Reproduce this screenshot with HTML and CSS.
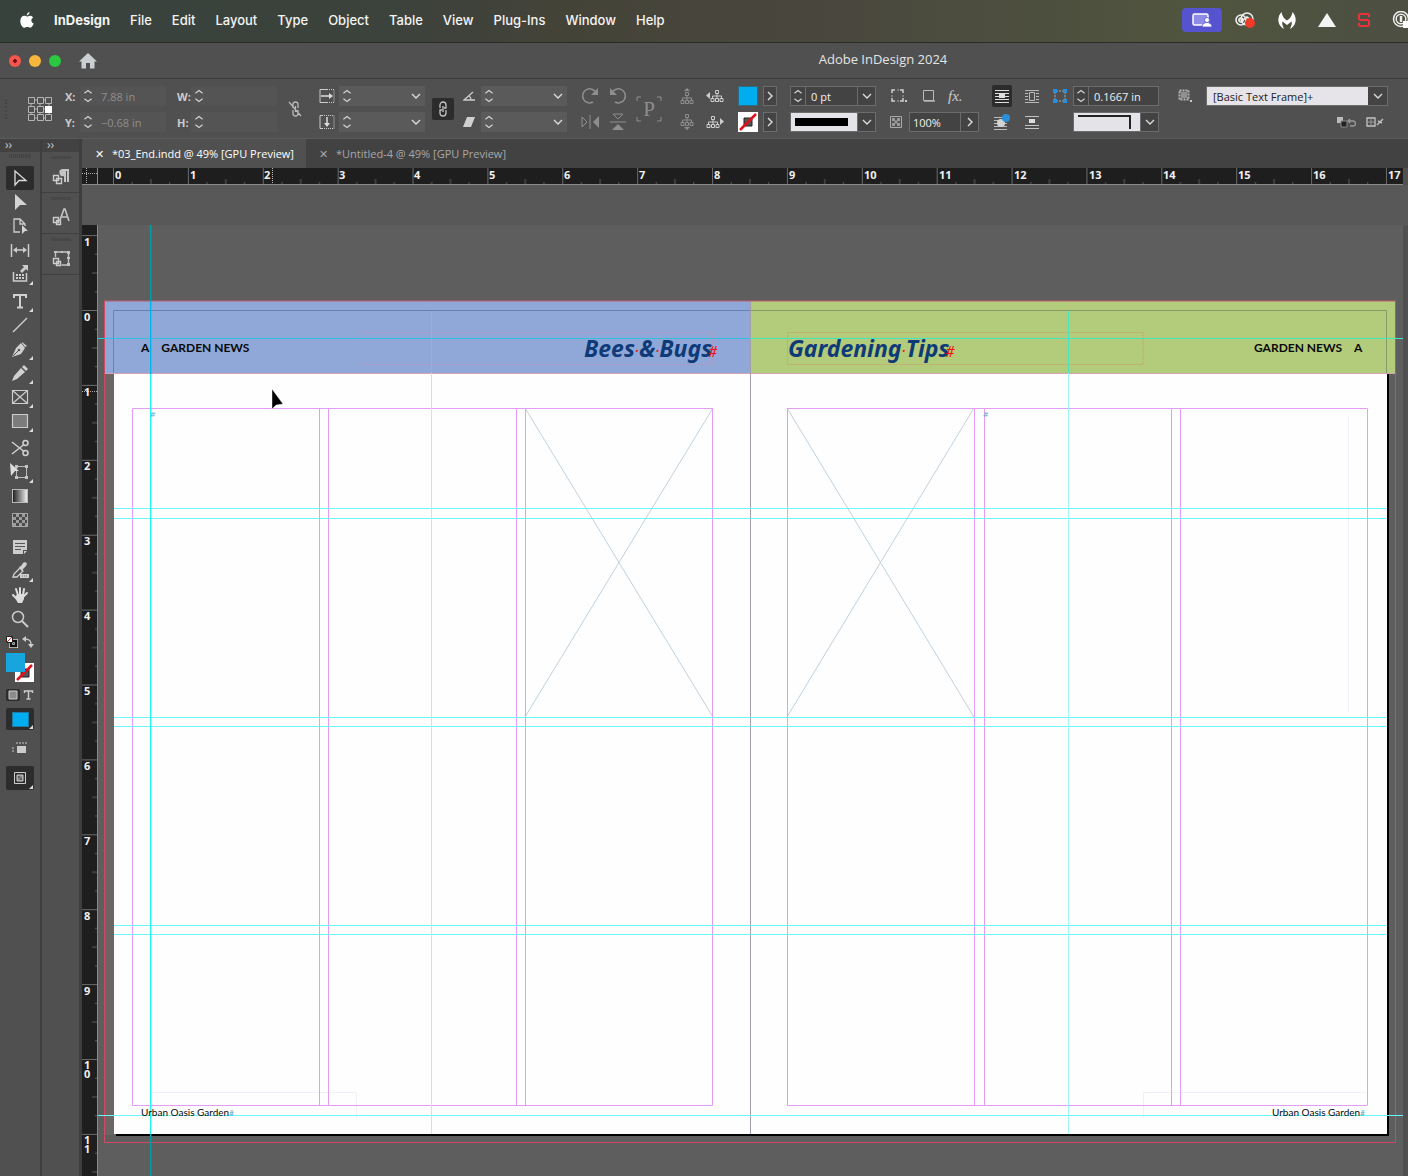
FILE: index.html
```
<!DOCTYPE html>
<html lang="en">
<head>
    <meta charset="UTF-8">
    <meta name="viewport" content="width=device-width, initial-scale=1.0">
    <title>Adobe InDesign 2024</title>
    <link rel="stylesheet" href="styles.css">
</head>
<body>
    <!-- shared icon shapes -->
    <svg class="defs" width="0" height="0" aria-hidden="true">
        <symbol id="spin" viewBox="0 0 14 20"><path d="M3 7l4-3 4 3M3 13l4 3 4-3" fill="none" stroke="#d4d4d4" stroke-width="1.3"/></symbol>
        <symbol id="down" viewBox="0 0 10 10"><path d="M1 3l4 4 4-4" fill="none" stroke="#dedede" stroke-width="1.3"/></symbol>
        <symbol id="right" viewBox="0 0 10 10"><path d="M3 1l4 4-4 4" fill="none" stroke="#dedede" stroke-width="1.4"/></symbol>
        <symbol id="tree" viewBox="0 0 14 12"><path d="M5.500.500h3v3h-3zM1 8.500h3v3H1zM5.500 8.500h3v3h-3zM10 8.500h3v3h-3zM7 3.500v5M2.500 8.500V6h9v2.500" fill="none" stroke="currentColor"/></symbol>
    </svg>

    <header class="menubar">
        <nav class="menus" aria-label="Menu bar">
            <button aria-label="Apple menu"><svg width="14" height="16" viewBox="0 0 14 16"><path d="M9.500 0c.1 1.600-1.100 3.300-2.700 3.500C6.600 2 8 .300 9.500 0zM7 4.500c.8 0 1.700-.8 3.100-.8 1.200 0 2.300.6 3 1.700-2.600 1.600-2.200 5 .6 6.100-.7 1.900-2 4.200-3.400 4.200-1.100 0-1.500-.7-2.900-.7s-1.800.7-2.900.7C2.500 15.700.3 12.400.3 8.900c0-3.200 2-5.100 4-5.100 1.200 0 2 .7 2.700.7z" fill="#fff"/></svg></button>
            <button class="app-name">InDesign</button>
            <button>File</button>
            <button>Edit</button>
            <button>Layout</button>
            <button>Type</button>
            <button>Object</button>
            <button>Table</button>
            <button>View</button>
            <button>Plug-Ins</button>
            <button>Window</button>
            <button>Help</button>
        </nav>
        <div class="status">
            <button class="share" aria-label="Screen sharing"><svg width="20" height="14" viewBox="0 0 20 14"><rect x="1" y="1" width="15" height="11" rx="1.500" fill="#8f8ce8" stroke="#fff" stroke-width="1.500"/><path d="M10 14c0-6 10-6 10 0z" fill="#fff" stroke="#5653cf" stroke-width=".8"/><circle cx="15" cy="7" r="2.500" fill="#fff" stroke="#5653cf" stroke-width=".8"/></svg></button>
            <svg width="22" height="18" viewBox="0 0 22 18"><g fill="none" stroke="#eee" stroke-width="1.600"><circle cx="7" cy="9" r="5"/><circle cx="13" cy="8" r="6"/><circle cx="7" cy="9" r="2"/><path d="M8 10l5-4 4 3"/></g><circle cx="16" cy="12" r="5" fill="#f03a2a"/></svg>
            <svg width="18" height="17" viewBox="0 0 18 17"><path d="M3.500 0C4 4 6 6.500 9 8.500 12 6.500 14 4 14.500 0c4 4 5 12-1.500 16.500h-1c2-3 2-5.500 1.500-7L9 13 4.500 9.500C4 11 4 13.500 6 16.500H5C-1.500 12-.5 4 3.500 0z" fill="#fff"/></svg>
            <svg width="18" height="14" viewBox="0 0 18 14"><path d="M9 0l9 14H0z" fill="#f4f4f4"/></svg>
            <svg width="12" height="14" viewBox="0 0 12 14"><path d="M11 4V2L10 1H2L1 2v4l1 1h8l1 1v4l-1 1H2l-1-1v-2" fill="none" stroke="#e8323c" stroke-width="2"/></svg>
            <svg width="18" height="18" viewBox="0 0 18 18"><g fill="none" stroke="#f0f0f0" stroke-width="1.500"><circle cx="9" cy="8" r="7.500"/><circle cx="9" cy="8" r="4.800"/><path d="M9 5v6" stroke-width="2.500"/></g><path d="M11 10h7v7h-7z" fill="#fff"/></svg>
        </div>
    </header>

    <div class="titlebar">
        <div class="lights">
            <button class="light close" aria-label="Close"></button>
            <button class="light minimize" aria-label="Minimize"></button>
            <button class="light full" aria-label="Full screen"></button>
            <button class="home" aria-label="Home"><svg width="18" height="16" viewBox="0 0 18 16"><path d="M9 0l9 8.500h-2.500V15.500H11V10H7v5.500H2.500v-7H0z" fill="#ccd0d4"/></svg></button>
        </div>
        <h1>Adobe InDesign 2024</h1>
    </div>

    <div class="control">
        <div class="tall grip"></div>
        <button class="tall" aria-label="Reference point"><svg width="26" height="26" viewBox="0 0 26 26"><path d="M4 4h18v18H4zM4 13h18M13 4v18" fill="none" stroke="#aaa"/><g fill="#505050" stroke="#b4b4b4"><path d="M1.500 1.500h6v6h-6zM10.500 1.500h6v6h-6zM18.500 1.500h6v6h-6zM1.500 10.500h6v6h-6zM10.500 10.500h6v6h-6zM1.500 18.500h6v6h-6zM10.500 18.500h6v6h-6zM18.500 18.500h6v6h-6z"/></g><path d="M18 10h7v7h-7z" fill="#fff"/></svg></button>

        <label for="pos-x">X:</label>
        <label for="pos-y">Y:</label>
        <div class="field dim"><svg class="spin"><use href="#spin"/></svg><input id="pos-x" value="7.88 in"></div>
        <div class="field dim"><svg class="spin"><use href="#spin"/></svg><input id="pos-y" value="−0.68 in"></div>
        <label for="size-w">W:</label>
        <label for="size-h">H:</label>
        <div class="field dim"><svg class="spin"><use href="#spin"/></svg><input id="size-w"></div>
        <div class="field dim"><svg class="spin"><use href="#spin"/></svg><input id="size-h"></div>
        <button class="tall" aria-label="Constrain width and height"><svg width="14" height="16" viewBox="0 0 14 16"><path d="M5 7V3.500a2.500 2.500 0 0 1 5 0V7M5 9v3.500a2.500 2.500 0 0 0 5 0V9M7.500 5v6M1 1l12 14" fill="none" stroke="#b8b8b8" stroke-width="1.300"/></svg></button>

        <label for="scale-x" aria-label="Scale X"><svg width="16" height="14" viewBox="0 0 16 14"><path d="M9 .500H1v13h8" fill="none" stroke="#ccc"/><path d="M10 .500h5v13h-5" fill="none" stroke="#ccc" stroke-dasharray="1 1"/><path d="M2 7h9" stroke="#ddd" stroke-width="1.500"/><path d="M10 4l4 3-4 3z" fill="#ddd"/></svg></label>
        <label for="scale-y" aria-label="Scale Y"><svg width="16" height="14" viewBox="0 0 16 14"><path d="M4 .500H1v13h3" fill="none" stroke="#ccc"/><path d="M5 .500h10v13H5" fill="none" stroke="#ccc" stroke-dasharray="1 1"/><path d="M8 2v7" stroke="#ddd" stroke-width="1.500"/><path d="M5 8h6l-3 4z" fill="#ddd"/></svg></label>
        <div class="field soft"><svg class="spin"><use href="#spin"/></svg><input id="scale-x"><button aria-label="Scale X presets"><svg class="mark"><use href="#down"/></svg></button></div>
        <div class="field soft"><svg class="spin"><use href="#spin"/></svg><input id="scale-y"><button aria-label="Scale Y presets"><svg class="mark"><use href="#down"/></svg></button></div>
        <button class="tall pressed" aria-label="Constrain scaling"><svg width="12" height="16" viewBox="0 0 12 16"><path d="M3 7V4a3 3 0 0 1 6 0v3H7M9 9v3a3 3 0 0 1-6 0V9h2M6 5v6" fill="none" stroke="#c4c4c4" stroke-width="1.300"/></svg></button>
        <label for="rotate" aria-label="Rotation"><svg width="12" height="10" viewBox="0 0 12 10"><path d="M10 1L1 9h11M6 5c2 1 2 2 2 4" fill="none" stroke="#ccc" stroke-width="1.300"/></svg></label>
        <label for="shear" aria-label="Shear"><svg width="12" height="10" viewBox="0 0 12 10"><path d="M4 0h8L8 10H0z" fill="#d0d0d0"/></svg></label>
        <div class="field soft"><svg class="spin"><use href="#spin"/></svg><input id="rotate"><button aria-label="Rotation presets"><svg class="mark"><use href="#down"/></svg></button></div>
        <div class="field soft"><svg class="spin"><use href="#spin"/></svg><input id="shear"><button aria-label="Shear presets"><svg class="mark"><use href="#down"/></svg></button></div>

        <button class="off" aria-label="Rotate clockwise"><svg width="18" height="18" viewBox="0 0 18 18"><path d="M12 15A7 7 0 1 1 15 6" fill="none" stroke="currentColor" stroke-width="1.500"/><path d="M17 1v7h-7z" fill="currentColor"/></svg></button>
        <button class="off" aria-label="Flip horizontal"><svg width="18" height="14" viewBox="0 0 18 14"><path d="M1 2l5 5-5 5zM9 0v14" fill="none" stroke="currentColor"/><path d="M18 1v12l-6-6z" fill="currentColor"/></svg></button>
        <button class="off" aria-label="Rotate counterclockwise"><svg width="18" height="18" viewBox="0 0 18 18"><path d="M6 15A7 7 0 1 0 3 6" fill="none" stroke="currentColor" stroke-width="1.500"/><path d="M1 1v7h7z" fill="currentColor"/></svg></button>
        <button class="off" aria-label="Flip vertical"><svg width="18" height="18" viewBox="0 0 18 18"><path d="M4 1l5 5 5-5zM1 9h16" fill="none" stroke="currentColor"/><path d="M3 17h12l-6-6z" fill="currentColor"/></svg></button>
        <div class="tall off flip"><svg width="26" height="26" viewBox="0 0 26 26"><path d="M1 5V1h4M21 1h4v4M25 21v4h-4M5 25H1v-4" fill="none" stroke="currentColor"/></svg><span>P</span></div>
        <button class="off" aria-label="Select container"><svg width="14" height="16" viewBox="0 0 14 16"><path d="M4 3h6L7 0z" fill="currentColor"/><use href="#tree" y="4" width="14" height="12"/></svg></button>
        <button class="off" aria-label="Select content"><svg width="14" height="16" viewBox="0 0 14 16"><path d="M4 13h6l-3 3z" fill="currentColor"/><use href="#tree" width="14" height="12"/></svg></button>
        <button aria-label="Select previous object"><svg width="18" height="12" viewBox="0 0 18 12"><path d="M4 2v7L0 5.500z" fill="currentColor"/><use href="#tree" x="4" width="14" height="12"/></svg></button>
        <button aria-label="Select next object"><svg width="18" height="12" viewBox="0 0 18 12"><path d="M14 2v7l4-3.500z" fill="currentColor"/><use href="#tree" width="14" height="12"/></svg></button>

        <button class="swatch fill" aria-label="Fill"></button>
        <button class="swatch" aria-label="Stroke"><svg width="20" height="20" viewBox="0 0 20 20"><path d="M0 0h20v20H0z" fill="#fff"/><path d="M6 6h8v8H6z" fill="#555" stroke="#222"/><path d="M2 18L18 2" stroke="#e0101e" stroke-width="2.500"/></svg></button>
        <button class="more" aria-label="Fill options"><svg class="mark"><use href="#right"/></svg></button>
        <button class="more" aria-label="Stroke options"><svg class="mark"><use href="#right"/></svg></button>
        <div class="field"><svg class="spin"><use href="#spin"/></svg><input value="0 pt" aria-label="Stroke weight"><button aria-label="Stroke weight presets"><svg class="mark"><use href="#down"/></svg></button></div>
        <button class="field preview" aria-label="Stroke type"><span class="sample"><i class="rule"></i></span><span class="chev"><svg class="mark"><use href="#down"/></svg></span></button>

        <div class="row spread-out">
            <button aria-label="Corner options"><svg width="18" height="14" viewBox="0 0 18 14"><path d="M2 4V1h3M10 1h3v3M13 9v3h-3M5 12H2V9" fill="none" stroke="#d0d0d0" stroke-width="1.500"/><path d="M7 1h2M13 6v2M7 12h2M2 6v2" stroke="#aaa"/><path d="M15 11h2v2h-2z" fill="#ccc"/></svg></button>
            <button aria-label="Drop shadow"><svg width="14" height="14" viewBox="0 0 14 14"><path d="M3 11h11v2H3z" fill="#999"/><path d="M2.500 1.500h10v10h-10z" fill="#4f4f4f" stroke="#bbb"/></svg></button>
            <button class="fx" aria-label="Effects">fx.</button>
        </div>
        <div class="row">
            <svg width="12" height="12" viewBox="0 0 12 12"><path d="M.500.500h11v11H.500z" fill="none" stroke="#aaa"/><path d="M2 2h3v3H2zM7 2h3v3H7zM4.500 4.500h3v3h-3zM2 7h3v3H2zM7 7h3v3H7z" fill="#9a9a9a"/></svg>
            <div class="field opacity"><input value="100%" aria-label="Opacity"><button aria-label="Opacity slider"><svg class="mark"><use href="#right"/></svg></button></div>
        </div>
        <button class="pressed small" aria-label="No text wrap"><svg width="14" height="14" viewBox="0 0 14 14"><path d="M0 1.500h14M0 4.500h14M0 7.500h14M0 10.500h14M0 13.500h14" stroke="#ddd"/><path d="M4 4h6v5H4z" fill="#ddd"/></svg></button>
        <button class="small" aria-label="Wrap around shape"><svg width="16" height="16" viewBox="0 0 16 16"><path d="M0 3.500h13M0 6.500h13M0 9.500h13M0 12.500h13M0 15.500h13" stroke="#bbb"/><circle cx="7" cy="9" r="4" fill="#d4d4d4"/><circle cx="12" cy="4" r="4" fill="#2b8ed8"/></svg></button>
        <button class="small" aria-label="Wrap around bounding box"><svg width="14" height="14" viewBox="0 0 14 14"><path d="M0 1.500h14M0 4.500h3M0 7.500h3M0 10.500h3M11 4.500h3M11 7.500h3M11 10.500h3M0 13.500h14" stroke="#b8b8b8"/><path d="M4.500 3.500h5v8h-5z" fill="none" stroke="#b8b8b8"/></svg></button>
        <button class="small" aria-label="Jump object"><svg width="14" height="14" viewBox="0 0 14 14"><path d="M0 1.500h14M0 10.500h14M0 13.500h14" stroke="#c4c4c4"/><path d="M4 4h6v4H4z" fill="#ddd"/></svg></button>
        <svg width="16" height="16" viewBox="0 0 16 16"><path d="M4 3h8M4 13h8M3 4v8M13 4v8" stroke="#aaa" stroke-dasharray="2 1"/><path d="M1 1h4v4H1zM11 1h4v4h-4zM1 11h4v4H1zM11 11h4v4h-4z" fill="#2b8ed8"/></svg>
        <span></span>
        <div class="field"><svg class="spin"><use href="#spin"/></svg><input value="0.1667 in" aria-label="Corner size"></div>
        <button class="field preview" aria-label="Corner shape"><span class="sample"><i class="bend"></i></span><span class="chev"><svg class="mark"><use href="#down"/></svg></span></button>
        <button aria-label="Object style options"><svg width="16" height="14" viewBox="0 0 16 14"><path d="M2.500 1.500h9v9h-9z" fill="none" stroke="#b4b4b4" stroke-width="2" stroke-dasharray="2 1"/><path d="M4 3h6v6H4z" fill="#909090"/><path d="M13 11h2v2h-2z" fill="#ccc"/></svg></button>
        <span></span>
        <div class="style-pick"><select aria-label="Object style"><option>[Basic Text Frame]+</option></select><svg class="mark"><use href="#down"/></svg></div>
        <div class="row trailing">
            <button class="off" aria-label="Clear overrides"><svg width="20" height="12" viewBox="0 0 20 12"><path d="M1 1h6v6H1z" fill="#bbb"/><path d="M5 5h6v6H5z" fill="#222" stroke="#888"/><path d="M14 3l-2 2 2 2M13 5h4a2 2 0 0 1 0 5h-3" fill="none" stroke="#999" stroke-width="1.300"/></svg></button>
            <button aria-label="Clear undefined attributes"><svg width="18" height="10" viewBox="0 0 18 10"><path d="M1 1h8v8H1z" fill="none" stroke="#c4c4c4" stroke-width="1.300"/><path d="M5 1v8M1 5h8" stroke="#999"/><path d="M11 8l6-6M12 4l4 2" stroke="#bbb" stroke-width="1.500"/></svg></button>
        </div>
    </div>

    <main class="workspace">
        <aside class="tools" aria-label="Tools">
            <div class="strip">››</div>
            <div class="handle"></div>
            <button class="tool active" aria-label="Selection"><svg width="20" height="20" viewBox="0 0 20 20"><path d="M5 3l11 9.500H9L5 17z" fill="none" stroke="#ddd" stroke-width="1.300"/></svg></button>
            <button class="tool" aria-label="Direct selection"><svg width="20" height="20" viewBox="0 0 20 20"><path d="M5 2l12 11h-7l-5 5z" fill="#d4d4d4"/></svg></button>
            <button class="tool" aria-label="Page"><svg width="20" height="20" viewBox="0 0 20 20"><path d="M10 16H4V3h6l5 5v2M10 3v5h5" fill="none" stroke="#ccc" stroke-width="1.300"/><path d="M12 9l6 6h-3l-3 3z" fill="#d4d4d4"/></svg></button>
            <button class="tool" aria-label="Gap"><svg width="20" height="20" viewBox="0 0 20 20"><path d="M1.500 4v13M18.500 4v13M4 10h12" stroke="#ccc" stroke-width="1.500"/><path d="M7 7l-4 3 4 3zM13 7l4 3-4 3z" fill="#ccc"/></svg></button>
            <button class="tool more-tools" aria-label="Content collector"><svg width="20" height="20" viewBox="0 0 20 20"><path d="M3.500 8v9h13V9" fill="none" stroke="#ccc" stroke-width="1.500"/><path d="M6 10h2v2H6zM9 10h2v2H9zM12 10h2v2h-2zM6 13h2v2H6zM9 13h2v2H9zM12 13h2v2h-2zM10 7l4-4-2-2h6v6l-2-2-4 4z" fill="#ccc"/></svg></button>
            <button class="tool more-tools set" aria-label="Type"><svg width="20" height="20" viewBox="0 0 20 20"><path d="M4 7V4h12v3M10 4v12M7 16.500h6" fill="none" stroke="#d0d0d0" stroke-width="2"/></svg></button>
            <button class="tool" aria-label="Line"><svg width="20" height="20" viewBox="0 0 20 20"><path d="M3 17L17 3" stroke="#ccc" stroke-width="1.500"/></svg></button>
            <button class="tool more-tools" aria-label="Pen"><svg width="20" height="20" viewBox="0 0 20 20"><path d="M12 3l5 4-2 1-3-4zM11 4l4 5-4 6-9 3 4-9z" fill="#d0d0d0"/><path d="M3 17l6-6" stroke="#505050"/><circle cx="9" cy="11" r="1.200" fill="#505050"/></svg></button>
            <button class="tool more-tools" aria-label="Pencil"><svg width="20" height="20" viewBox="0 0 20 20"><path d="M14 2l4 4-2 2-4-4zM11 5l4 4-8 7-5 2 2-5z" fill="#d0d0d0"/></svg></button>
            <button class="tool more-tools" aria-label="Rectangle frame"><svg width="20" height="20" viewBox="0 0 20 20"><path d="M2.500 3.500h15v13h-15zl15 13M17.500 3.500l-15 13" fill="none" stroke="#ccc" stroke-width="1.200"/></svg></button>
            <button class="tool more-tools" aria-label="Rectangle"><svg width="20" height="20" viewBox="0 0 20 20"><path d="M2.500 3.500h15v13h-15z" fill="#7c7c7c" stroke="#ccc" stroke-width="1.200"/></svg></button>
            <button class="tool set" aria-label="Scissors"><svg width="20" height="20" viewBox="0 0 20 20"><g fill="none" stroke="#d0d0d0" stroke-width="1.500"><circle cx="15.500" cy="5" r="2.500"/><circle cx="15.500" cy="15" r="2.500"/><path d="M2 4l12 9.500M2 16l12-9.500"/></g></svg></button>
            <button class="tool more-tools" aria-label="Free transform"><svg width="20" height="20" viewBox="0 0 20 20"><path d="M6.500 4.500h10v11h-10z" fill="none" stroke="#bbb"/><path d="M5 3h3v3H5zM15 3h3v3h-3zM5 14h3v3H5zM15 14h3v3h-3z" fill="#c4c4c4"/><path d="M0 1l9 8H5l-4 5z" fill="#ddd"/></svg></button>
            <button class="tool" aria-label="Gradient swatch"><span class="gradient"></span></button>
            <button class="tool" aria-label="Gradient feather"><svg width="16" height="14" viewBox="0 0 16 14"><path d="M.500.500h15v13H.500z" fill="#4a4a4a" stroke="#aaa"/><path d="M1 4h3v3H1zM7 4h3v3H7zM4 7h3v3H4zM10 7h3v3h-3zM1 10h3v3H1zM7 10h3v3H7zM13 4h2v3h-2zM13 10h2v3h-2zM4 1h3v3H4zM10 1h3v3h-3z" fill="#9c9c9c"/></svg></button>
            <button class="tool set" aria-label="Note"><svg width="20" height="20" viewBox="0 0 20 20"><path d="M3 3h14v10h-4v4H3zM14 14h3l-3 3z" fill="#ccc"/><path d="M5 6.500h10M5 9.500h10M5 12.500h6" stroke="#555"/></svg></button>
            <button class="tool more-tools" aria-label="Color theme"><svg width="20" height="20" viewBox="0 0 20 20"><path d="M3 16l1-3 6-6 3 3-6 6z" fill="none" stroke="#d0d0d0" stroke-width="1.300"/><path d="M9 6l2-1 2-3c3-2 5 1 3 3l-3 3-1 2zM10 13h9v4h-9z" fill="#d0d0d0"/><path d="M12 15h5" stroke="#666" stroke-dasharray="1 1"/></svg></button>
            <button class="tool" aria-label="Hand"><svg width="20" height="20" viewBox="0 0 20 20"><path d="M6 4l2 6M10 3v7M14 4l-1 6M17 8l-4 4M3 10l4 4" stroke="#ddd" stroke-width="2" stroke-linecap="round"/><path d="M7 9h7v5l-2 4H8l-3-5z" fill="#ddd"/></svg></button>
            <button class="tool" aria-label="Zoom"><svg width="20" height="20" viewBox="0 0 20 20"><circle cx="8" cy="8" r="5.500" fill="none" stroke="#ccc" stroke-width="1.500"/><path d="M12 12l6 6" stroke="#ccc" stroke-width="2"/></svg></button>
            <div class="pair">
                <button aria-label="Default fill and stroke"><svg width="12" height="14" viewBox="1 0 12 14"><path d="M6 6h5v5H6z" fill="none" stroke="#ddd" stroke-width="4"/><path d="M6 6h5v5H6z" fill="none" stroke="#111" stroke-width="2.500"/><path d="M1.500 1.500h6v6h-6z" fill="#fff" stroke="#222"/><path d="M2 7l5-5" stroke="#d22"/></svg></button>
                <button aria-label="Swap fill and stroke"><svg width="12" height="12" viewBox="0 0 12 12"><path d="M3 3c5 0 6 2 6 6" fill="none" stroke="#ccc" stroke-width="1.500"/><path d="M0 3l4-3v6zM6 8h6l-3 4z" fill="#ccc"/></svg></button>
            </div>
            <div class="colors"><svg width="28" height="30" viewBox="0 0 28 30"><path d="M9 10h19v19H9z" fill="#fff"/><path d="M15 16h8v8h-8z" fill="#555" stroke="#222"/><path d="M11 27L26 12" stroke="#e0101e" stroke-width="2.500"/><path d="M0 0h19v19H0z" fill="#18a5dd"/></svg></div>
            <div class="pair">
                <button class="pressed" aria-label="Formatting affects container"><svg width="14" height="12" viewBox="0 0 14 12"><path d="M3 2h8v8H3z" fill="#8c8c8c" stroke="#ccc"/></svg></button>
                <button aria-label="Formatting affects text"><svg width="12" height="12" viewBox="0 0 12 12"><path d="M2.500 4V2h8v2M6.500 2v8M4.500 10h4" fill="none" stroke="#ccc" stroke-width="1.400"/></svg></button>
            </div>
            <button class="tool active more-tools apply" aria-label="Apply color"><span class="cyan"></span></button>
            <button class="tool view" aria-label="View options"><svg width="16" height="12" viewBox="0 0 16 12"><path d="M5 4h9v7H5z" fill="#ccc"/><path d="M4 1h11M1 5v6" stroke="#a0a0a0" stroke-width="1.500" stroke-dasharray="2 1"/></svg></button>
            <button class="tool active more-tools view" aria-label="Screen mode"><svg width="12" height="12" viewBox="0 0 12 12"><path d="M.500.500h11v11H.500z" fill="none" stroke="#ccc"/><path d="M3 3h6v6H3z" fill="#888" stroke="#ccc"/><path d="M4 5h2M6 7h2" stroke="#333"/></svg></button>
        </aside>

        <aside class="dock" aria-label="Panels">
            <div class="strip">››</div>
            <button class="panel" aria-label="Paragraph styles"><svg width="20" height="20" viewBox="0 0 20 20"><path d="M11 2h7v13h-2V4h-1v11h-2V9a3.500 3.500 0 0 1-2-7z" fill="#c4c4c4"/><path d="M2.500 8.500h5v5h-5zM5.500 11.500h5v5h-5z" fill="#505050" stroke="#ccc" stroke-width="1.400"/></svg></button>
            <button class="panel" aria-label="Character styles"><svg width="20" height="20" viewBox="0 0 20 20"><path d="M9 12l4-11h1l4 12M10 9h7" fill="none" stroke="#c4c4c4" stroke-width="1.600"/><path d="M2.500 9.500h5v5h-5zM5.500 12.500h4v4h-4z" fill="#505050" stroke="#ccc" stroke-width="1.400"/></svg></button>
            <button class="panel" aria-label="Object styles"><svg width="20" height="20" viewBox="0 0 20 20"><path d="M4.500 8V3h13v13h-7" fill="none" stroke="#c4c4c4" stroke-width="1.400"/><path d="M3 2h3v2H3zM16 2h3v3h-3zM16 14h3v3h-3zM10 2h2v2h-2zM16 8h3v2h-3z" fill="#c4c4c4"/><path d="M2.500 9.500h5v5h-5zM5.500 12.500h4v4h-4z" fill="#505050" stroke="#ccc" stroke-width="1.400"/></svg></button>
        </aside>

        <section class="document">
            <div class="tabs" role="tablist">
                <button class="tab current" role="tab" aria-selected="true"><span>✕</span>*03_End.indd @ 49% [GPU Preview]</button>
                <button class="tab" role="tab" aria-selected="false"><span>✕</span>*Untitled-4 @ 49% [GPU Preview]</button>
            </div>
            <svg class="ruler-x" height="17" viewBox="82 168 1326 17" preserveAspectRatio="xMinYMin slice">
                <defs>
                    <pattern id="inch-x" x="113" y="168" width="74.880" height="17" patternUnits="userSpaceOnUse">
                        <path d="M.500 0v17" stroke="#6a6a6a"/>
                        <path d="M19.200 14v3M37.900 11v6M56.600 14v3" stroke="#5c5c5c"/>
                    </pattern>
                </defs>
                <path d="M82 168h1321v16H82z" fill="#1e1e1e"/>
                <path d="M98 168h1305v16H98z" fill="url(#inch-x)"/>
                <path d="M82 168h16v16H82z" fill="#1e1e1e"/>
                <path d="M82 173.500h16M86.500 168v16" stroke="#aaa" stroke-dasharray="1 1"/>
                <path d="M97.500 168v16M82 184.500h1321" stroke="#8a8a8a"/>
                <path d="M272.500 168v16" stroke="#bbb" stroke-dasharray="1 1"/>
                <g class="ruler-text">
                    <text x="115" y="179">0</text><text x="190" y="179">1</text><text x="264" y="179">2</text>
                    <text x="339" y="179">3</text><text x="414" y="179">4</text><text x="489" y="179">5</text>
                    <text x="564" y="179">6</text><text x="639" y="179">7</text><text x="714" y="179">8</text>
                    <text x="789" y="179">9</text><text x="864" y="179">10</text><text x="939" y="179">11</text>
                    <text x="1014" y="179">12</text><text x="1089" y="179">13</text><text x="1163" y="179">14</text>
                    <text x="1238" y="179">15</text><text x="1313" y="179">16</text><text x="1388" y="179">17</text>
                </g>
            </svg>
            <div class="gutter"></div>
            <div class="view-area">
                <svg class="ruler-y" width="16" height="951" viewBox="82 225 16 951">
                    <defs>
                        <pattern id="inch-y" x="82" y="310" width="16" height="74.900" patternUnits="userSpaceOnUse">
                            <path d="M0 .500h16" stroke="#6a6a6a"/>
                            <path d="M13 19.200h3M10 37.900h6M13 56.600h3" stroke="#5c5c5c"/>
                        </pattern>
                    </defs>
                    <path d="M82 225h16v951H82z" fill="#1e1e1e"/>
                    <path d="M82 225h16v951H82z" fill="url(#inch-y)"/>
                    <path d="M97.500 225v951" stroke="#8a8a8a"/>
                    <path d="M82 391.500h16" stroke="#aaa" stroke-dasharray="1 1"/>
                    <g class="ruler-text">
                        <text x="84" y="246">1</text><text x="84" y="321">0</text><text x="84" y="396">1</text>
                        <text x="84" y="470">2</text><text x="84" y="545">3</text><text x="84" y="620">4</text>
                        <text x="84" y="695">5</text><text x="84" y="770">6</text><text x="84" y="845">7</text>
                        <text x="84" y="920">8</text><text x="84" y="995">9</text>
                        <text><tspan x="84" y="1069">1</tspan><tspan x="84" y="1078">0</tspan></text>
                        <text><tspan x="84" y="1144">1</tspan><tspan x="84" y="1153">1</tspan></text>
                    </g>
                </svg>
                <div class="pasteboard">
                    <svg class="art" width="1305" height="951" viewBox="98 225 1305 951">
                        <!-- pages -->
                        <path d="M105 373h9v762h-9z" fill="#6b6664"/>
                        <path d="M116 373h1273v763H116z" fill="#000"/>
                        <path d="M114 310h1273v824H114z" fill="#fefefe"/>
                        <path d="M105 301h645v72H105z" fill="#8fa8d8"/>
                        <path d="M750 301h646v72H750z" fill="#b3cc7c"/>
                        <path d="M113.500 373v-62.500H750" fill="none" stroke="#6680b4"/>
                        <path d="M750 310.500h636.500V373" fill="none" stroke="#869868"/>
                        <path d="M105 373.500h1291" stroke="#d4a4b4"/>
                        <path d="M750.500 301v833" stroke="#a49cac"/>
                        <path d="M104.500 301v841.500h1291V301" fill="none" stroke="#cf4a62"/>
                        <path d="M104 301h1292" stroke="#c45a6c"/>

                        <!-- empty frames -->
                        <g fill="none" stroke="#c0d0dc">
                            <path d="M525 408l188 309M713 408L525 717M787 408l187 309M974 408L787 717"/>
                        </g>
                        <g fill="none" stroke="#f0f0f8">
                            <path d="M150 1092.500h206.500V1118M1366 1092.500h-222.500V1118M1348.500 416v296"/>
                        </g>
                        <path d="M357.500 332.500h355v32H357.500z" fill="none" stroke="#bc90b4" stroke-dasharray="1 1"/>
                        <path d="M787.500 332.500h355.500v32H787.500z" fill="none" stroke="#cc9a66" stroke-dasharray="1 1"/>

                        <!-- margins and columns -->
                        <g fill="none" stroke="#e49cf6">
                            <path d="M132.500 408.500h580v697h-580zM319.500 408v697M328.500 408v697M516.500 408v697M525.500 408v697"/>
                            <path d="M787.500 408.500h580v697h-580zM974.500 408v697M984.500 408v697M1171.500 408v697M1180.500 408v697"/>
                        </g>

                        <!-- ruler guides -->
                        <g fill="none" stroke="#6cf6f8">
                            <path d="M114 508.500h1273M114 518.500h1273M114 717.500h1273M114 726.500h1273M114 925.500h1273M114 934.500h1273"/>
                            <path d="M98 1115.500h1305"/>
                        </g>
                        <path d="M431.500 373v761M1068.500 373v761" stroke="#a0f6f8"/>
                        <path d="M431.500 311v62" stroke="#6cc4e4"/>
                        <path d="M1068.500 311v62M750 338.500h653" stroke="#48e4c0"/>
                        <path d="M98 338.500h652" stroke="#34bee0"/>
                        <path d="M150.700 225v76M150.700 1134v42" stroke="#00a0a4" stroke-width="1.400"/>
                        <path d="M150.700 301v73" stroke="#00b4f0" stroke-width="1.400"/>
                        <path d="M150.700 374v760" stroke="#20f6fa" stroke-width="1.400"/>

                        <path d="M272 389v20l4-4 7-1z" fill="#000" stroke="#fff" stroke-width=".4"/>
                    </svg>
                    <p class="running left">A<span>GARDEN NEWS</span></p>
                    <h2 class="headline left">Bees<i>·</i>&amp;<i>·</i>Bugs<b>#</b></h2>
                    <h2 class="headline right">Gardening<i>·</i>Tips<b>#</b></h2>
                    <p class="running right"><span>GARDEN NEWS</span>A</p>
                    <span class="story left">#</span>
                    <span class="story right">#</span>
                    <p class="footer left">Urban Oasis Garden<b>#</b></p>
                    <p class="footer right">Urban Oasis Garden<b>#</b></p>
                </div>
                <div class="edge"></div>
            </div>
        </section>
    </main>
</body>
</html>
```
FILE: styles.css
```
* {
    margin: 0;
    padding: 0;
    box-sizing: border-box;
}

body {
    height: 100vh;
    display: flex;
    flex-direction: column;
    overflow: hidden;
    background: #505050;
    color: #e4e4e4;
    font-family: "Open Sans", "Liberation Sans", sans-serif;
    font-size: 11px;
}

button {
    display: flex;
    align-items: center;
    justify-content: center;
    background: none;
    border: 0;
    color: inherit;
    font: inherit;
}

svg {
    display: block;
    flex: none;
}

.defs {
    position: absolute;
}

/* Menu bar */
.menubar {
    display: flex;
    justify-content: space-between;
    flex: none;
    height: 43px;
    padding: 0 0 2px 20px;
    overflow: hidden;
    border-bottom: 1px solid #2a2c28;
    background: linear-gradient(90deg, #38423d 0%, #3c423c 28%, #444338 40%, #4a483e 60%, #50553f 85%, #4c4f42 100%);
}

.menus,
.status {
    display: flex;
    align-items: center;
}

.menus {
    gap: 20px;
}

.menus button {
    color: #f4f4f4;
    font-family: Inter, "Liberation Sans", sans-serif;
    font-size: 13px;
    font-weight: 500;
}

.menus .app-name {
    font-weight: 700;
}

.status {
    gap: 22px;
    margin-right: -2px;
}

.share {
    width: 40px;
    height: 24px;
    margin-right: -10px;
    border-radius: 4px;
    background: #5653cf;
}

/* Title bar */
.titlebar {
    display: grid;
    grid-template-columns: 1fr auto 1fr;
    align-items: center;
    flex: none;
    height: 36px;
    padding-left: 358px;
    border-bottom: 1px solid #3c3c3c;
    background: #505050;
}

.lights {
    display: flex;
    align-items: center;
    gap: 8px;
    margin-left: -349px;
}

.titlebar h1 {
    padding-bottom: 4px;
    font-size: 13px;
    font-weight: 400;
}

.light {
    width: 12px;
    height: 12px;
    border-radius: 50%;
}

.close {
    background: radial-gradient(circle, #7a0c10 2px, #f2564d 2px);
}

.minimize {
    background: #f6b73c;
}

.full {
    background: #2bc840;
}

.home {
    margin-left: 10px;
}

/* Control panel: two rows of fields and buttons */
.control {
    display: grid;
    grid-auto-flow: column;
    grid-template-rows: 20px 20px;
    grid-template-columns: 22px 38px 15px 97px 14px 97px 31px 20px 93px 31px 18px 100px 28px 27px 44px 26px 32px 25px 27px 100px 102px 30px 30px 21px 104px 29px 1fr;
    row-gap: 6px;
    align-items: center;
    justify-items: start;
    flex: none;
    height: 60px;
    padding: 7px 20px 6px 5px;
    border-bottom: 1px solid #5a5a5a;
    background: #505050;
    color: #ccc;
}

.control label {
    font-weight: 700;
}

.tall {
    grid-row: span 2;
}

.grip {
    width: 2px;
    height: 20px;
    border-right: 2px dotted #444;
}

.field {
    display: flex;
    align-items: stretch;
    width: 86px;
    height: 20px;
    border: 1px solid #6c6c6c;
    background: #434343;
}

.field input {
    flex: 1;
    min-width: 0;
    padding-left: 5px;
    border: 0;
    background: none;
    color: #f0f0f0;
    font: inherit;
}

.field button,
.field .chev {
    display: flex;
    align-items: center;
    justify-content: center;
    width: 18px;
    border-left: 1px solid #6c6c6c;
}

.spin {
    width: 15px;
    height: 18px;
    border-right: 1px solid #6c6c6c;
}

.mark {
    width: 10px;
    height: 10px;
}

.dim,
.soft {
    border-color: #545454;
    background: #545454;
}

.soft {
    border-color: #5a5a5a;
    background: #5a5a5a;
}

.dim input {
    color: #8e8e8e;
}

.dim .spin,
.soft .spin,
.soft button {
    border-color: transparent;
}

.pressed {
    width: 22px;
    height: 22px;
    border-radius: 2px;
    background: #2c2c2c;
}

.small {
    width: 20px;
}

.control .off {
    color: #8e8e8e;
}

.flip {
    display: grid;
    place-items: center;
    font-family: "Liberation Serif", serif;
    font-size: 21px;
    line-height: 26px;
}

.flip > * {
    grid-area: 1 / 1;
}

.swatch {
    width: 20px;
    height: 20px;
}

.swatch.fill {
    border: 1px solid #2f6a80;
    background: #00aeef;
}

.more {
    width: 14px;
    height: 20px;
    border: 1px solid #6c6c6c;
    background: #444;
}

.preview .sample {
    display: flex;
    align-items: center;
    flex: 1;
    padding: 0 9px 0 4px;
    background: #e4e4e8;
}

.rule {
    width: 100%;
    height: 8px;
    background: #000;
}

.bend {
    width: 100%;
    height: 14px;
    border: solid #222;
    border-width: 2px 2px 0 0;
}

.row {
    display: flex;
    align-items: center;
    gap: 7px;
}

.spread-out {
    gap: 13px;
}

.fx {
    font-family: "Liberation Serif", serif;
    font-size: 15px;
    font-style: italic;
    line-height: 20px;
}

.opacity {
    width: 70px;
}

.opacity input {
    padding-left: 3px;
}

.style-pick {
    display: grid;
    grid-template-columns: 1fr 19px;
    align-items: center;
    justify-items: center;
    width: 100%;
    max-width: 182px;
    height: 20px;
    border: 1px solid #6c6c6c;
    background: #444;
}

.style-pick select {
    width: 100%;
    height: 18px;
    padding-left: 6px;
    appearance: none;
    border: 0;
    border-radius: 0;
    background: #e6e4e8;
    color: #222;
    font: inherit;
}

.trailing {
    width: 100%;
    max-width: 178px;
    justify-content: flex-end;
    gap: 10px;
}

/* Workspace */
.workspace {
    display: flex;
    flex: 1;
    min-height: 0;
    background: #3e3e3e;
}

.tools,
.dock {
    flex: none;
    display: flex;
    flex-direction: column;
    background: #505050;
}

.tools {
    width: 40px;
    padding: 0 6px;
    margin-right: 2px;
}

.dock {
    width: 37px;
    margin-right: 3px;
}

.strip {
    height: 13px;
    margin: 0 -6px;
    padding-left: 5px;
    background: #424242;
    color: #ccc;
    font-size: 12px;
    line-height: 11px;
}

.dock .strip {
    margin: 0;
}

.handle {
    height: 4px;
    margin: 2px 3px 8px;
    background: repeating-linear-gradient(90deg, #444 0 1px, #4c4c4c 1px 2px);
}

.tool {
    position: relative;
    flex: none;
    width: 28px;
    height: 24px;
    border-radius: 2px;
}

.active {
    background: #2c2c2c;
}

.set {
    margin-top: 3px;
}

.more-tools::after {
    content: "";
    position: absolute;
    right: 1px;
    bottom: 1px;
    border: 2px solid;
    border-color: transparent #ddd #ddd transparent;
}

.gradient {
    width: 16px;
    height: 14px;
    border: 1px solid #bbb;
    background: linear-gradient(90deg, #222, #eee);
}

.pair {
    display: flex;
    align-items: center;
    justify-content: space-between;
    flex: none;
    height: 21px;
}

.pair .pressed {
    width: 14px;
    height: 12px;
}

.colors {
    flex: none;
    height: 30px;
    margin: 1px 0;
}

.cyan {
    width: 17px;
    height: 15px;
    border: 1px solid #1b7ba3;
    background: #00aeef;
}

.apply {
    margin-top: 3px;
    height: 22px;
}

.view {
    margin-top: 6px;
}

.panel {
    position: relative;
    height: 41px;
    padding-top: 9px;
    border-bottom: 1px solid #404040;
}

.panel::before {
    content: "";
    position: absolute;
    top: 4px;
    width: 20px;
    height: 3px;
    background: #484848;
}

/* Document window */
.document {
    display: flex;
    flex-direction: column;
    flex: 1;
    min-width: 0;
}

.tabs {
    display: flex;
    flex: none;
    height: 29px;
    background: #424242;
}

.tab {
    gap: 8px;
    padding: 0 12px 0 13px;
    color: #a8a8a8;
    font-weight: 500;
}

.tab.current {
    background: #505050;
    color: #fff;
}

.ruler-x {
    width: 100%;
    background: #505050;
}

.ruler-text {
    fill: #f0f0f0;
    font-size: 11px;
    font-weight: 700;
}

.gutter {
    flex: none;
    height: 40px;
    background: #585858;
}

.view-area {
    display: flex;
    flex: 1;
    min-height: 0;
    overflow: hidden;
}

.pasteboard {
    position: relative;
    flex: 1;
    min-width: 0;
    overflow: hidden;
    background: #5e5e5e;
}

.edge {
    flex: none;
    width: 5px;
    background: #505050;
}

/* Page items, placed on the spread */
.running,
.headline,
.story,
.footer {
    position: absolute;
    white-space: nowrap;
    color: #0a0a0a;
}

.running,
.footer {
    font-family: Lato, "Open Sans", sans-serif;
}

.running {
    top: 115px;
    font-size: 12px;
    font-weight: 700;
    line-height: 16px;
}

.running.left {
    left: 43px;
}

.running.left span {
    margin-left: 12px;
}

.running.right {
    left: 1156px;
}

.running.right span {
    margin-right: 12px;
}

.headline {
    top: 107px;
    color: #0f3a78;
    font-family: "Noto Sans", "Open Sans", sans-serif;
    font-size: 23px;
    font-style: italic;
    font-weight: 700;
    line-height: 32px;
}

.headline.left {
    left: 486px;
}

.headline.right {
    left: 690px;
}

.headline i,
.headline b {
    color: #f01010;
    font-size: 16px;
    font-weight: 400;
}

.headline b {
    margin-left: -4px;
    font-family: Lato, "Open Sans", sans-serif;
}

.story {
    top: 184px;
    color: #58a6c4;
    font-size: 8px;
    font-style: italic;
    line-height: 10px;
}

.story.left {
    left: 52px;
}

.story.right {
    left: 885px;
}

.footer {
    top: 880px;
    font-size: 10px;
    line-height: 14px;
}

.footer.left {
    left: 43px;
}

.footer.right {
    left: 1174px;
}

.footer b {
    color: #58a6c4;
    font-size: 8px;
    font-weight: 400;
}
```
